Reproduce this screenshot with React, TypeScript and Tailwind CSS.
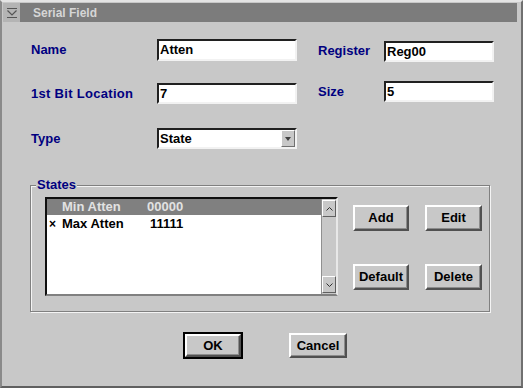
import React from "react";

const font = { fontFamily: '"Liberation Sans", Arial, sans-serif' };

function Field({ value, className }: { value: string; className: string }) {
    return (
        <div
            className={`bg-white border-2 border-t-[#202020] border-l-[#202020] border-b-[#f2f2f2] border-r-[#f2f2f2] flex items-center pl-[1px] text-[13px] font-bold text-black ${className}`}
        >
            {value}
        </div>
    );
}

function Button({ label, className = "" }: { label: string; className?: string }) {
    return (
        <div
            className={`bg-[#c8c8c8] border-2 border-t-white border-l-white border-b-[#505050] border-r-[#505050] shadow-[inset_-1px_-1px_0_#8c8c8c] flex items-center justify-center text-[13px] font-bold text-black ${className}`}
        >
            {label}
        </div>
    );
}

export default function App() {
    return (
        <div
            className="w-[523px] h-[388px] bg-[#c8c8c8] border-2 border-t-[#e4e4e4] border-l-[#8a8a8a] border-r-[#707070] border-b-[#606060] flex flex-col overflow-hidden"
            style={font}
        >
            {/* Title bar */}
            <div className="mt-[1px] ml-[1px] w-[514px] h-[19px] flex bg-[#7c7c7c]">
                <div className="w-[17px] h-full bg-[#b4b4b4] flex items-center justify-center">
                    <svg width="12" height="12" viewBox="0 0 12 12">
                        <path d="M1 1.5H11M1.5 3.5L6 8L10.5 3.5M1 10.5H11" stroke="#555" strokeWidth="1.2" fill="none" />
                    </svg>
                </div>
                <div className="pl-[13px] flex items-center text-[12px] font-bold text-[#d6d6d6]">
                    Serial Field
                </div>
            </div>

            {/* Form rows */}
            <div className="pl-[29px] mt-[17px] flex flex-col">
                <div className="flex items-start h-[22px]">
                    <div className="w-[126px] h-[22px] flex items-center text-[13px] font-bold text-[#000080]">Name</div>
                    <Field value="Atten" className="w-[140px] h-[22px]" />
                    <div className="ml-[21px] w-[66px] h-[21px] mt-[1px] flex items-center text-[13px] font-bold text-[#000080]">Register</div>
                    <Field value="Reg00" className="w-[110px] h-[21px] mt-[2px]" />
                </div>

                <div className="flex items-start h-[21px] mt-[22px]">
                    <div className="w-[126px] h-[21px] flex items-center text-[13px] font-bold text-[#000080] tracking-[0.3px]">1st Bit Location</div>
                    <Field value="7" className="w-[140px] h-[21px]" />
                    <div className="ml-[21px] w-[66px] h-[21px] -mt-[2px] flex items-center text-[13px] font-bold text-[#000080]">Size</div>
                    <Field value="5" className="w-[110px] h-[21px] -mt-[2px]" />
                </div>

                <div className="flex items-start h-[21px] mt-[24px]">
                    <div className="w-[126px] h-[21px] flex items-center text-[13px] font-bold text-[#000080]">Type</div>
                    <div className="w-[140px] h-[21px] bg-white border-2 border-t-[#202020] border-l-[#202020] border-b-[#f2f2f2] border-r-[#f2f2f2] flex">
                        <div className="flex-1 flex items-center pl-[1px] text-[13px] font-bold text-black">State</div>
                        <div className="w-[14px] h-full bg-[#c8c8c8] border border-t-white border-l-white border-b-[#707070] border-r-[#707070] flex items-center justify-center">
                            <svg width="6" height="4" viewBox="0 0 6 4">
                                <path d="M0 0H6L3 4Z" fill="#404040" />
                            </svg>
                        </div>
                    </div>
                </div>
            </div>

            {/* States group */}
            <div className="relative ml-[28px] mt-[36px] w-[460px] h-[127px] border border-[#808080] shadow-[1px_1px_0_#f4f4f4,inset_1px_1px_0_#f4f4f4] flex">
                <span className="absolute -top-[9px] left-[5px] px-[1px] bg-[#c8c8c8] text-[13px] leading-[15px] font-bold text-[#000080]">
                    States
                </span>

                {/* List box */}
                <div className="ml-[14px] mt-[11px] w-[293px] h-[99px] border-2 border-t-[#101010] border-l-[#101010] border-b-[#808080] border-r-[#e8e8e8] bg-white flex">
                    <div className="flex-1 flex flex-col text-[13px] font-bold">
                        <div className="h-[16px] bg-[#808080] text-[#e2e2e2] flex items-center">
                            <span className="w-[15px]" />
                            <span className="w-[85px]">Min Atten</span>
                            <span>00000</span>
                        </div>
                        <div className="h-[17px] text-black flex items-center">
                            <span className="w-[15px] pl-[2px] text-[12px]">×</span>
                            <span className="w-[85px]">Max Atten</span>
                            <span className="ml-[3px]">11111</span>
                        </div>
                    </div>
                    <div className="w-[15px] h-full bg-[#c8c8c8] border-l border-[#909090] flex flex-col justify-between py-px">
                        <div className="h-[17px] border border-t-white border-l-white border-b-[#606060] border-r-[#606060] flex items-center justify-center">
                            <svg width="7" height="4" viewBox="0 0 7 4">
                                <path d="M0.5 3.5L3.5 0.5L6.5 3.5" stroke="#303030" fill="none" />
                            </svg>
                        </div>
                        <div className="h-[17px] border border-t-white border-l-white border-b-[#606060] border-r-[#606060] flex items-center justify-center">
                            <svg width="7" height="4" viewBox="0 0 7 4">
                                <path d="M0.5 0.5L3.5 3.5L6.5 0.5" stroke="#303030" fill="none" />
                            </svg>
                        </div>
                    </div>
                </div>

                {/* Buttons */}
                <div className="ml-[15px] mt-[19px] grid grid-cols-[56px_57px] gap-x-[16px] gap-y-[33px] h-fit">
                    <Button label="Add" className="h-[26px]" />
                    <Button label="Edit" className="h-[26px]" />
                    <Button label="Default" className="h-[26px]" />
                    <Button label="Delete" className="h-[26px]" />
                </div>
            </div>

            {/* Bottom buttons */}
            <div className="mt-[20px] ml-[181px] flex items-start">
                <div className="w-[60px] h-[27px] border-2 border-black">
                    <Button label="OK" className="w-full h-full" />
                </div>
                <Button label="Cancel" className="ml-[46px] mt-[1px] w-[58px] h-[25px]" />
            </div>
        </div>
    );
}
